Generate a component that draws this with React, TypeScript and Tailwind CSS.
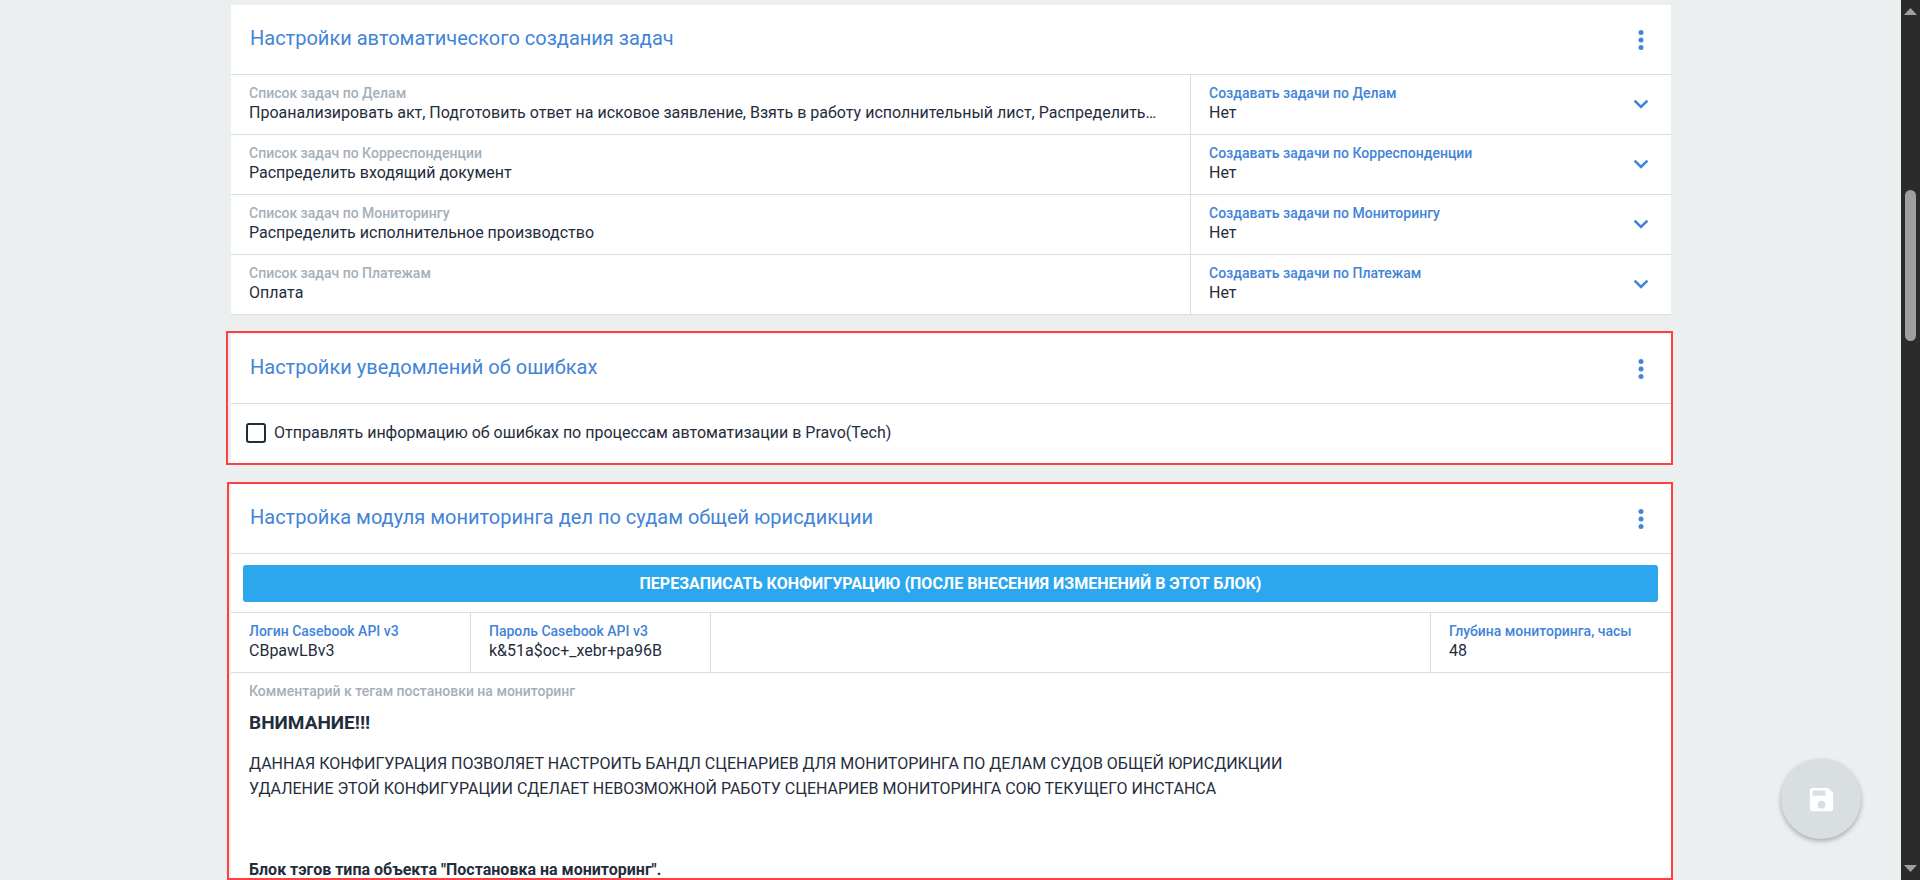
import { useId, type ReactNode } from "react";

const LABEL = "block truncate text-sm leading-4 font-medium";
const VALUE = "mt-0.5 block w-full truncate text-base leading-5 text-[#1f2d3d]";

function Card({ title, children, frame }: { title: string; children: ReactNode; frame?: string }) {
  return (
    <section className="relative bg-white shadow-[0_1px_0_#d8dde0]">
      <header className="flex h-[70px] items-center justify-between border-b border-[#d8dde0] pr-[18px] pl-[19px]">
        <h2 className="pb-1 text-xl leading-7 text-[#4284d7]">{title}</h2>
        <button type="button" aria-label="Меню" className="flex size-6 items-center justify-center text-[#4284d7]">
          <svg viewBox="0 0 24 24" className="size-6" fill="currentColor">
            <circle cx="12" cy="4.5" r="2.5" />
            <circle cx="12" cy="12" r="2.5" />
            <circle cx="12" cy="19.5" r="2.5" />
          </svg>
        </button>
      </header>
      {children}
      {frame && <span aria-hidden="true" className={`pointer-events-none absolute border-2 border-[#ff4040] ${frame}`} />}
    </section>
  );
}

function SelectField({ label }: { label: string }) {
  const id = useId();
  return (
    <div className="relative px-[18px] pt-[10px]">
      <label htmlFor={id} className={`${LABEL} text-[#4284d7]`}>{label}</label>
      <select id={id} className={`${VALUE} appearance-none bg-transparent outline-none`}>
        <option>Нет</option>
        <option>Да</option>
      </select>
      <svg viewBox="0 0 24 24" className="pointer-events-none absolute top-[17px] right-[18px] size-6" fill="none" stroke="#4284d7" strokeWidth="2.6">
        <path d="M5.600 8.600 12 15 18.400 8.600" />
      </svg>
    </div>
  );
}

function TextField({ label, value, className = "" }: { label: string; value: string; className?: string }) {
  const id = useId();
  return (
    <div className={`px-[18px] pt-[10px] ${className}`}>
      <label htmlFor={id} className={`${LABEL} text-[#4284d7]`}>{label}</label>
      <input id={id} type="text" defaultValue={value} className={`${VALUE} bg-transparent outline-none`} />
    </div>
  );
}

const TASKS = [
  {
    name: "Делам",
    list: "Проанализировать акт, Подготовить ответ на исковое заявление, Взять в работу исполнительный лист, Распределить…",
  },
  { name: "Корреспонденции", list: "Распределить входящий документ" },
  { name: "Мониторингу", list: "Распределить исполнительное производство" },
  { name: "Платежам", list: "Оплата" },
];

function Scrollbar() {
  return (
    <div aria-hidden="true" className="flex w-[19px] shrink-0 flex-col items-center justify-between bg-[#2b2b2b] py-2">
      <svg viewBox="0 0 13 7" className="h-[7px] w-[13px]" fill="#9f9f9f"><path d="M6.500 0 13 7H0z" /></svg>
      <div className="flex w-[11px] flex-1 flex-col pt-[175px]">
        <div className="h-[151px] rounded-full bg-[#9f9f9f]" />
      </div>
      <svg viewBox="0 0 13 7" className="h-[7px] w-[13px]" fill="#9f9f9f"><path d="M0 0H13L6.500 7z" /></svg>
    </div>
  );
}

export default function App() {
  return (
    <div className="flex h-screen overflow-hidden bg-[#ebeff0] font-['Roboto',sans-serif] text-[#1f2d3d]">
      <main className="min-w-0 flex-1 overflow-hidden pt-[5px] pl-px">
        <div className="mx-auto flex max-w-[1440px] flex-col gap-5">
          <Card title="Настройки автоматического создания задач">
            {TASKS.map((task) => (
              <div key={task.name} className="grid h-[60px] grid-cols-[2fr_1fr] border-b border-[#d8dde0] last:h-[59px] last:border-b-0">
                <div className="min-w-0 border-r border-[#d8dde0] px-[18px] pt-[10px]">
                  <span className={`${LABEL} text-[#a5afb9]`}>Список задач по {task.name}</span>
                  <span className={VALUE}>{task.list}</span>
                </div>
                <SelectField label={`Создавать задачи по ${task.name}`} />
              </div>
            ))}
          </Card>

          <Card title="Настройки уведомлений об ошибках" frame="-top-[3px] -right-[2px] -bottom-px -left-[5px]">
            <label className="flex h-[60px] items-center gap-2 px-[15px] pb-0.5 text-base leading-5">
              <input type="checkbox" className="size-5 appearance-none rounded-[3px] border-2 border-[#1f2d3d] bg-white" />
              Отправлять информацию об ошибках по процессам автоматизации в Pravo(Tech)
            </label>
          </Card>

          <Card title="Настройка модуля мониторинга дел по судам общей юрисдикции" frame="-top-[2px] -right-[2px] bottom-0 -left-1">
            <div className="border-b border-[#d8dde0] pt-[11px] pr-[13px] pb-[10px] pl-3">
              <button type="button" className="block h-[37px] w-full rounded-[3px] bg-[#2ca7ee] text-base leading-5 font-bold text-white uppercase">
                Перезаписать конфигурацию (после внесения изменений в этот блок)
              </button>
            </div>
            <div className="grid h-[60px] grid-cols-[1fr_1fr_3fr_1fr] border-b border-[#d8dde0]">
              <TextField label="Логин Casebook API v3" value="CBpawLBv3" className="border-r border-[#d8dde0]" />
              <TextField label="Пароль Casebook API v3" value="k&51a$oc+_xebr+pa96B" className="border-r border-[#d8dde0]" />
              <div className="border-r border-[#d8dde0]" />
              <TextField label="Глубина мониторинга, часы" value="48" />
            </div>
            <div className="px-[18px] pt-[10px]">
              <span className={`${LABEL} text-[#a5afb9]`}>Комментарий к тегам постановки на мониторинг</span>
              <h3 className="mt-3 text-[19px] leading-6 font-bold">ВНИМАНИЕ!!!</h3>
              <p className="mt-4 text-base leading-[25px]">
                ДАННАЯ КОНФИГУРАЦИЯ ПОЗВОЛЯЕТ НАСТРОИТЬ БАНДЛ СЦЕНАРИЕВ ДЛЯ МОНИТОРИНГА ПО ДЕЛАМ СУДОВ ОБЩЕЙ ЮРИСДИКЦИИ
                <br />
                УДАЛЕНИЕ ЭТОЙ КОНФИГУРАЦИИ СДЕЛАЕТ НЕВОЗМОЖНОЙ РАБОТУ СЦЕНАРИЕВ МОНИТОРИНГА СОЮ ТЕКУЩЕГО ИНСТАНСА
              </p>
              <p className="mt-[59px] text-base leading-5 font-bold">Блок тэгов типа объекта "Постановка на мониторинг".</p>
            </div>
          </Card>
        </div>
      </main>

      <button
        type="button"
        aria-label="Сохранить"
        className="fixed right-[59px] bottom-[41px] flex size-20 items-center justify-center rounded-full bg-[#d9dee1] text-white shadow-[0_2px_5px_rgba(0,0,0,0.3)]"
      >
        <svg viewBox="0 0 24 24" className="size-[31px]" fill="currentColor" fillRule="evenodd">
          <path d="M17 3H5a2 2 0 0 0-2 2v14a2 2 0 0 0 2 2h14a2 2 0 0 0 2-2V7zM12 19a3 3 0 1 1 0-6 3 3 0 0 1 0 6zM5 5h10v4H5z" />
        </svg>
      </button>

      <Scrollbar />
    </div>
  );
}
